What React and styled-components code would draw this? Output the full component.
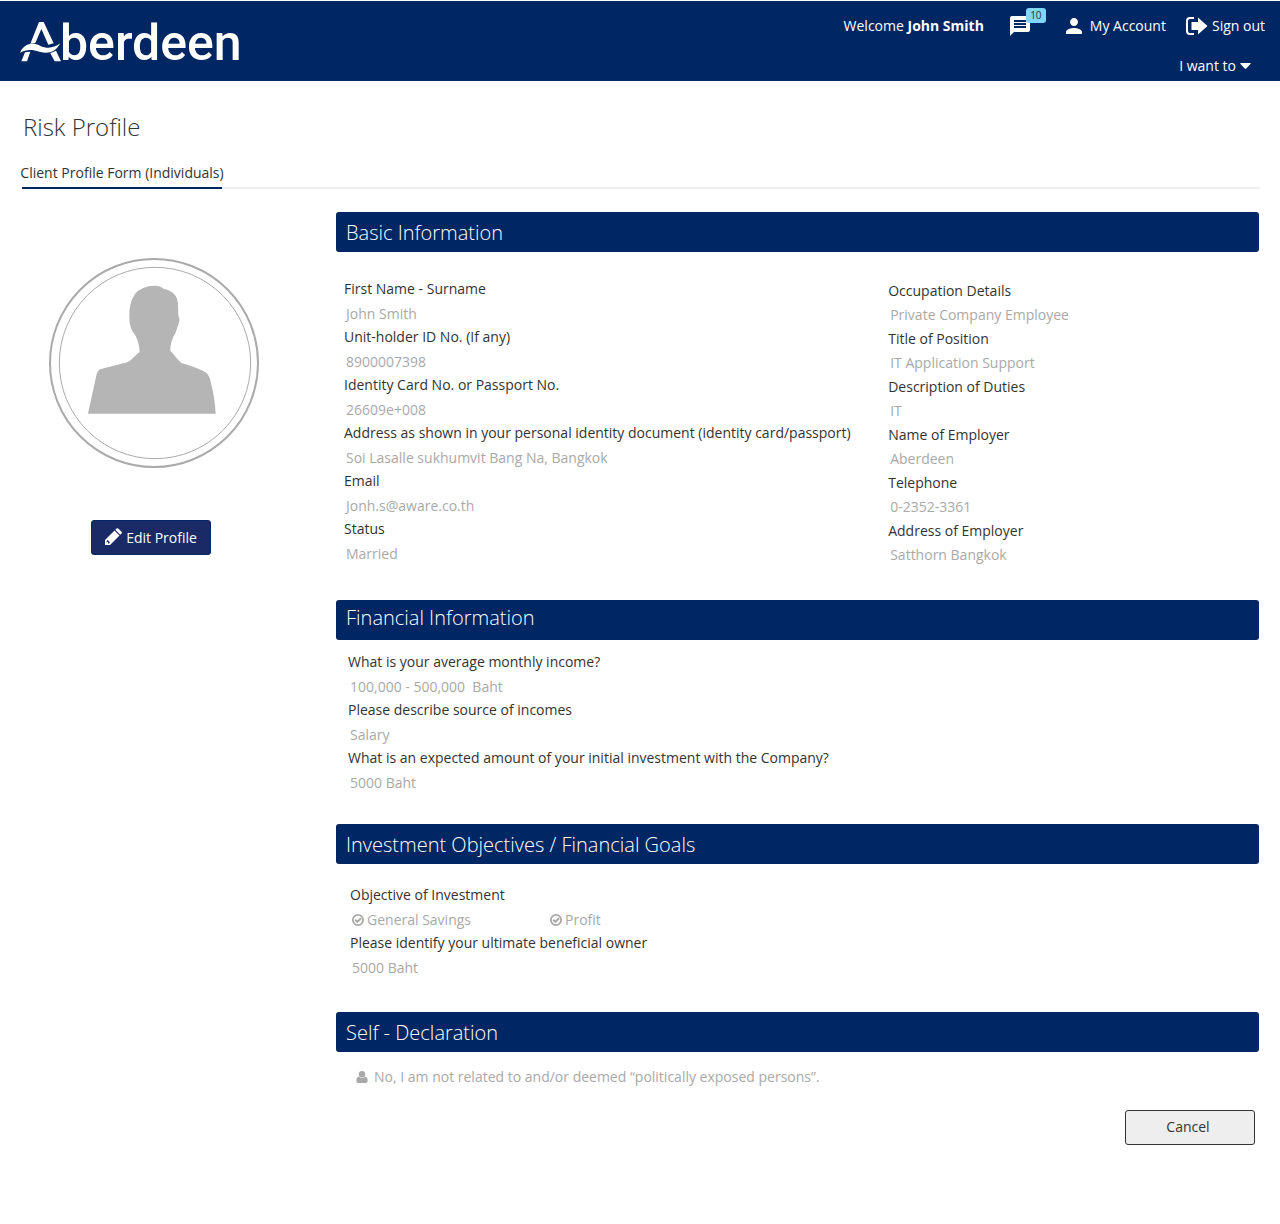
import React from 'react';
import styled, { createGlobalStyle } from 'styled-components';
import { MdMessage, MdPerson } from 'react-icons/md';

const navy = '#002663';
const ink = '#333333';
const muted = '#a9a9a9';

const GlobalStyle = createGlobalStyle`
  * { box-sizing: border-box; }
  body {
    margin: 0;
    background: #ffffff;
    color: ${ink};
    font-family: 'Open Sans', 'Noto Sans', sans-serif;
    font-size: 14px;
    line-height: 24px;
  }
  h1, h2, dl, dd, p { margin: 0; }
  button { font: inherit; cursor: pointer; }
`;

const Page = styled.div`
  padding: 1px 0 48px;
`;

const Header = styled.header`
  display: flex;
  justify-content: space-between;
  height: 80px;
  padding: 0 15px 0 20px;
  background: ${navy};
  color: #ffffff;
`;

const Logo = styled.a`
  display: flex;
  align-items: flex-end;
  height: 61px;
  color: #ffffff;
  text-decoration: none;
  font-family: Roboto, 'Open Sans', sans-serif;
  font-size: 50px;
  font-weight: 500;
  line-height: 38px;
`;

const HeaderSide = styled.div`
  display: flex;
  flex-direction: column;
  align-items: flex-end;
  gap: 16px;
  padding-top: 13px;
`;

const Nav = styled.nav`
  display: flex;
  align-items: center;
  height: 24px;
`;

const Welcome = styled.span`
  margin-right: 24px;
`;

const Messages = styled.a`
  position: relative;
  display: flex;
  margin-right: 30px;
  color: #ffffff;
`;

const Badge = styled.span`
  position: absolute;
  top: -6px;
  left: 18px;
  width: 20px;
  border-radius: 3px;
  background: #7fd6f5;
  color: ${ink};
  font-size: 10px;
  line-height: 15px;
  text-align: center;
`;

const NavLink = styled.a`
  display: flex;
  align-items: center;
  gap: 4px;
  margin-left: ${(p) => p.$gap || 0}px;
  color: #ffffff;
  text-decoration: none;
`;

const WantTo = styled.button`
  display: flex;
  align-items: center;
  gap: 4px;
  margin-right: 14px;
  padding: 0;
  border: 0;
  background: none;
  color: #ffffff;
`;

const Title = styled.h1`
  padding: 30px 23px 0;
  font-size: 24px;
  font-weight: 300;
  line-height: 32px;
`;

const TabBar = styled.div`
  display: flex;
  margin: 16px 20px 0 22px;
  box-shadow: inset 0 -2px #eeeeee;
`;

const Tab = styled.button`
  display: flex;
  justify-content: center;
  width: 200px;
  height: 30px;
  padding: 2px 0 0;
  border: 0;
  border-bottom: 2px solid ${navy};
  background: none;
  color: ${ink};
  white-space: nowrap;
`;

const Columns = styled.main`
  display: grid;
  grid-template-columns: 268px 1fr;
  gap: 48px;
  padding: 23px 21px 0 20px;
`;

const Aside = styled.aside`
  display: flex;
  flex-direction: column;
  align-items: center;
  gap: 52px;
  padding-top: 46px;
`;

const EditButton = styled.button`
  display: flex;
  align-items: center;
  justify-content: center;
  gap: 4px;
  width: 120px;
  height: 35px;
  margin-right: 6px;
  padding: 0;
  border: 1px solid ${navy};
  border-radius: 3px;
  background: #1a2a66;
  color: #ffffff;
`;

const SectionTitle = styled.h2`
  height: 40px;
  padding: 0 10px;
  border-radius: 3px;
  background: ${navy};
  color: #ffffff;
  font-size: 20px;
  font-weight: 300;
  line-height: ${(p) => (p.$raised ? 36 : 42)}px;
`;

const SectionBody = styled.div`
  display: grid;
  grid-template-columns: ${(p) => (p.$split ? '3fr 2fr' : '1fr')};
  padding: ${(p) => p.$top}px 8px ${(p) => p.$bottom}px ${(p) => p.$inset}px;
`;

const Value = styled.dd`
  display: flex;
  padding: 2px 0 0 2px;
  color: ${muted};
  line-height: 22px;
  white-space: pre-wrap;
`;

const Fields = styled.dl`
  padding-top: ${(p) => (p.$lowered ? 2 : 0)}px;

  ${Value} {
    padding-top: ${(p) => (p.$lowered ? 1 : 2)}px;
    padding-bottom: ${(p) => (p.$lowered ? 1 : 0)}px;
  }
`;

const Choice = styled.span`
  display: flex;
  align-items: center;
  gap: 3px;
  width: 198px;
`;

const Declaration = styled.p`
  display: flex;
  align-items: center;
  gap: 6px;
  padding-left: 6px;
  color: ${muted};
`;

const Actions = styled.div`
  display: flex;
  justify-content: flex-end;
  padding-right: 4px;
`;

const CancelButton = styled.button`
  width: 130px;
  height: 35px;
  padding: 0 4px 1px 0;
  border: 1px solid ${ink};
  border-radius: 3px;
  background: #eeeeee;
  color: ${ink};
`;

const LogoMark = () => (
  <svg width="40" height="41" viewBox="60 62 120 123" overflow="visible" fill="#fff" aria-hidden="true">
    <path d="M91 130 L117 65 H131 L161 129 L145 133 L124 86 L106 128 Z" />
    <path d="M60 157 C74 128 98 126 120 136 C142 146 160 144 181 129 C166 157 144 162 118 154 C94 146 78 148 60 157 Z" />
    <path d="M75 156 L91 154 L81 183 H64 Z M151 159 L168 151 L183 183 H164 Z" />
  </svg>
);

const SignOutIcon = () => (
  <svg width="22" height="18" viewBox="0 0 22 18" aria-hidden="true">
    <path d="M8 1H4Q1 1 1 4V14Q1 17 4 17H8" fill="none" stroke="#fff" strokeWidth="2" />
    <path d="M5.500 5H12V0.500L21.500 9L12 17.500V13H5.500Z" fill="#fff" />
  </svg>
);

const Caret = () => (
  <svg width="11" height="6" viewBox="0 0 11 6" aria-hidden="true">
    <path d="M0.500 0H10.500Q11 0.500 10.500 1L6 5.700Q5.500 6 5 5.700L0.500 1Q0 0.500 0.500 0Z" fill="#fff" />
  </svg>
);

const Pencil = () => (
  <svg width="17" height="20" viewBox="0 0 17 20" fill="#fff" aria-hidden="true">
    <path d="M0 17V12L9.500 2.500L14.500 7.500L5 17ZM1.600 13V14H3V15.400H4L5 14.400L2.600 12Z" fillRule="evenodd" />
    <path d="M10.300 1.700L11.500 0.500Q12.300 -0.200 13.200 0.500L16.500 3.800Q17.200 4.700 16.500 5.500L15.300 6.700Z" />
  </svg>
);

const CheckCircle = () => (
  <svg width="12" height="12" viewBox="0 0 12 12" fill="none" stroke={muted} aria-hidden="true">
    <circle cx="6" cy="6" r="5.100" strokeWidth="1.800" />
    <path d="M3.200 5.700L5.400 7.900L9 4.300" strokeWidth="2" />
  </svg>
);

const UserIcon = () => (
  <svg width="12" height="12" viewBox="0 0 12 12" fill={muted} aria-hidden="true">
    <circle cx="6" cy="3.200" r="3.200" />
    <path d="M3 5.500Q6 8.500 9 5.500Q11.700 6 11.700 9.800Q11.700 12 9.800 12H2.200Q0.300 12 0.300 9.800Q0.300 6 3 5.500Z" />
  </svg>
);

const Avatar = () => (
  <svg width="210" height="210" viewBox="27 24 630 630" role="img" aria-label="Profile picture">
    <circle cx="342" cy="339" r="312" fill="none" stroke="#aaa" strokeWidth="6" />
    <circle cx="345" cy="339" r="287" fill="none" stroke="#aaa" strokeWidth="3" />
    <path
      fill="#b5b5b5"
      d="M144 491L170 372Q174 358 186 356L250 340Q270 336 282 321L299 305Q298 280 286 256Q268 236 268 205Q264 108 345 107Q362 107 370 116Q412 124 414 162L415 197Q420 204 417 216Q412 235 406 250Q390 275 391 303Q402 312 410 325L424 339Q470 352 495 366Q510 375 513 400Q524 440 527 491Z"
    />
  </svg>
);

const personal = [
  ['First Name - Surname', 'John Smith'],
  ['Unit-holder ID No. (If any)', '8900007398'],
  ['Identity Card No. or Passport No.', '26609e+008'],
  ['Address as shown in your personal identity document (identity card/passport)', 'Soi Lasalle sukhumvit Bang Na, Bangkok'],
  ['Email', 'Jonh.s@aware.co.th'],
  ['Status', 'Married'],
];

const occupation = [
  ['Occupation Details', 'Private Company Employee'],
  ['Title of Position', 'IT Application Support'],
  ['Description of Duties', 'IT'],
  ['Name of Employer', 'Aberdeen'],
  ['Telephone', '0-2352-3361'],
  ['Address of Employer', 'Satthorn Bangkok'],
];

const financial = [
  ['What is your average monthly income?', '100,000 - 500,000  Baht'],
  ['Please describe source of incomes', 'Salary'],
  ['What is an expected amount of your initial investment with the Company?', '5000 Baht'],
];

const objectives = [
  [
    'Objective of Investment',
    <>
      <Choice><CheckCircle />General Savings</Choice>
      <Choice><CheckCircle />Profit</Choice>
    </>,
  ],
  ['Please identify your ultimate beneficial owner', '5000 Baht'],
];

const FieldList = ({ items, lowered }) => (
  <Fields $lowered={lowered}>
    {items.map(([label, value]) => (
      <React.Fragment key={label}>
        <dt>{label}</dt>
        <Value>{value}</Value>
      </React.Fragment>
    ))}
  </Fields>
);

export default function App() {
  return (
    <Page>
      <GlobalStyle />
      <Header>
        <Logo href="#" aria-label="Aberdeen">
          <LogoMark />
          <span>berdeen</span>
        </Logo>
        <HeaderSide>
          <Nav>
            <Welcome>Welcome <strong>John Smith</strong></Welcome>
            <Messages href="#" aria-label="Messages">
              <MdMessage size={24} />
              <Badge>10</Badge>
            </Messages>
            <NavLink href="#"><MdPerson size={24} />My Account</NavLink>
            <NavLink href="#" $gap={20}><SignOutIcon />Sign out</NavLink>
          </Nav>
          <WantTo type="button">I want to<Caret /></WantTo>
        </HeaderSide>
      </Header>
      <Title>Risk Profile</Title>
      <TabBar>
        <Tab type="button">Client Profile Form (Individuals)</Tab>
      </TabBar>
      <Columns>
        <Aside>
          <Avatar />
          <EditButton type="button"><Pencil />Edit Profile</EditButton>
        </Aside>
        <div>
          <section>
            <SectionTitle>Basic Information</SectionTitle>
            <SectionBody $split $top={25} $bottom={33} $inset={8}>
              <FieldList items={personal} />
              <FieldList items={occupation} lowered />
            </SectionBody>
          </section>
          <section>
            <SectionTitle $raised>Financial Information</SectionTitle>
            <SectionBody $top={10} $bottom={30} $inset={12}>
              <FieldList items={financial} />
            </SectionBody>
          </section>
          <section>
            <SectionTitle>Investment Objectives / Financial Goals</SectionTitle>
            <SectionBody $top={19} $bottom={33} $inset={14}>
              <FieldList items={objectives} />
            </SectionBody>
          </section>
          <section>
            <SectionTitle>Self - Declaration</SectionTitle>
            <SectionBody $top={13} $bottom={21} $inset={14}>
              <Declaration><UserIcon />No, I am not related to and/or deemed “politically exposed persons”.</Declaration>
            </SectionBody>
          </section>
          <Actions>
            <CancelButton type="button">Cancel</CancelButton>
          </Actions>
        </div>
      </Columns>
    </Page>
  );
}
